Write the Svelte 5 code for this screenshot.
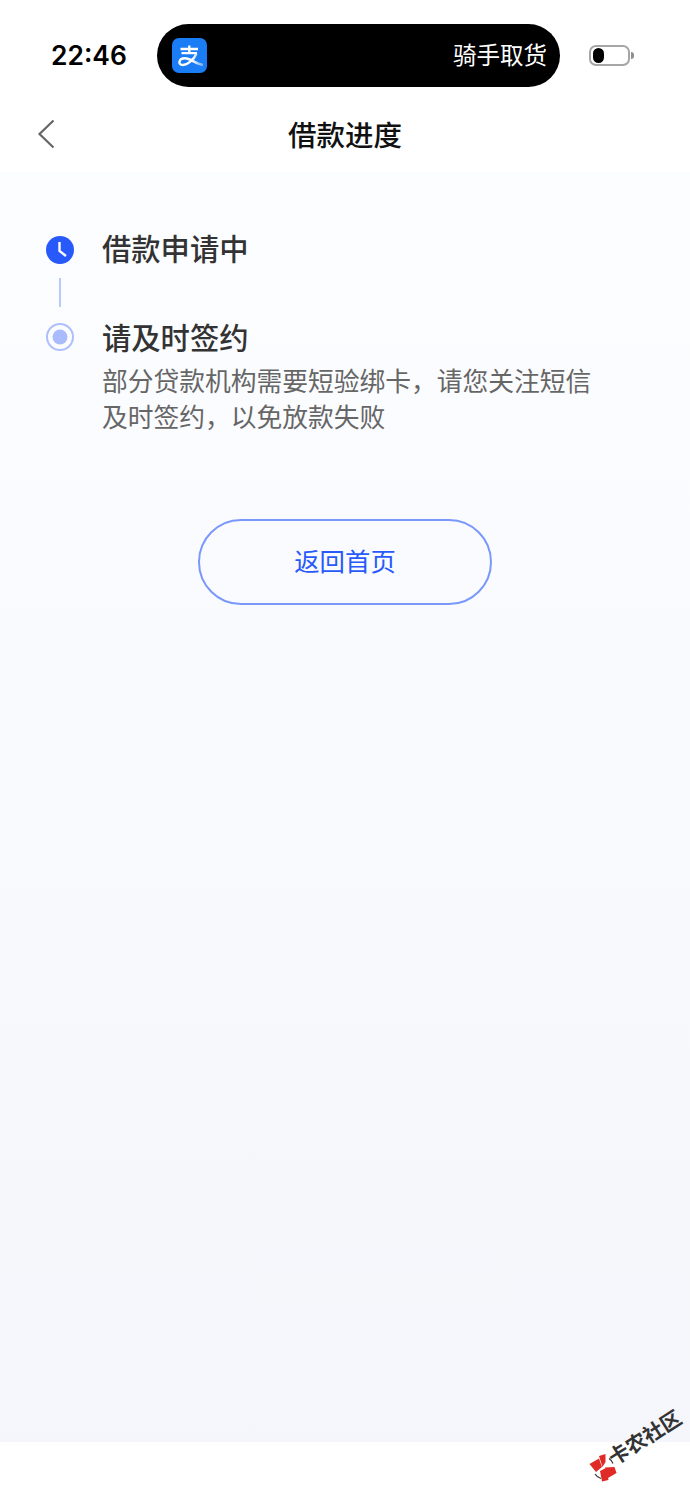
<script>
	const steps = [
		{ title: '借款申请中', kind: 'done' },
		{ title: '请及时签约', kind: 'current', desc: '部分贷款机构需要短验绑卡，请您关注短信及时签约，以免放款失败' }
	];
</script>

<div class="page">
	<header class="top">
		<div class="status">
			<span class="time">22:46</span>
			<div class="island">
				<svg class="app-logo" width="35" height="35" viewBox="0 0 35 35" aria-hidden="true">
					<defs>
						<linearGradient id="swoosh" x1="0" x2="1" y1="0" y2="0">
							<stop offset="0.55" stop-color="#fff" />
							<stop offset="1" stop-color="#fff" stop-opacity="0.35" />
						</linearGradient>
					</defs>
					<rect width="35" height="35" rx="7" fill="#1a7df5" />
					<path d="M8.5 11H26M17.3 7.5V15M9.5 15.2H25" fill="none" stroke="#fff" stroke-width="2.3" />
					<path d="M24.5 15.5C22 22 15 27 11 27C5.5 27 6.5 20.3 13 20.3C18.5 20.3 24 26 31 27" fill="none" stroke="url(#swoosh)" stroke-width="2.4" />
				</svg>
				<span class="island-text">骑手取货</span>
			</div>
			<div class="battery">
				<div class="battery-body"><div class="battery-level"></div></div>
				<div class="battery-cap"></div>
			</div>
		</div>
		<div class="nav">
			<svg class="back" width="20" height="32" viewBox="0 0 20 32" aria-hidden="true">
				<path d="M17.5 2.5 3.5 16l14 13.5" fill="none" stroke="#666" stroke-width="2.2" />
			</svg>
			<h1>借款进度</h1>
		</div>
	</header>

	<main class="content">
		<ul class="steps">
			{#each steps as step, i}
				<li class="step">
					<div class="rail">
						{#if step.kind === 'done'}
							<svg width="28" height="28" viewBox="0 0 28 28" aria-hidden="true">
								<circle cx="14" cy="14" r="14" fill="#2859fb" />
								<path d="M13.5 6v9l6.5 5" fill="none" stroke="#fff" stroke-width="2.4" />
							</svg>
						{:else}
							<svg width="28" height="28" viewBox="0 0 28 28" aria-hidden="true">
								<circle cx="14" cy="14" r="13" fill="none" stroke="#aebffd" stroke-width="2" />
								<circle cx="14" cy="14" r="7.5" fill="#a9bbfd" />
							</svg>
						{/if}
						{#if i < steps.length - 1}
							<div class="line"></div>
						{/if}
					</div>
					<div class="body">
						<div class="title">{step.title}</div>
						{#if step.desc}
							<p class="desc">{step.desc}</p>
						{/if}
					</div>
				</li>
			{/each}
		</ul>
		<button class="home">返回首页</button>
	</main>

	<footer class="bottom"></footer>

	<!-- site watermark stamped over the corner -->
	<div class="mark">
		<svg width="32" height="32" viewBox="0 0 32 32" aria-hidden="true">
			<circle cx="15.5" cy="15" r="10" fill="#fff" />
			<path d="M7 22a10 10 0 0 0 6 4.500M21 6.500a10 10 0 0 1 4 5" fill="none" stroke="#333" stroke-width="1.2" />
			<path d="M1.500 12 11 6.500l3 8.500-6 5z M11 4 17.500 2v8l-3 5z M17 15.500 26.500 15l2 6-8.500 5z M12 19l6-3 2.500 12-6.500 1.500z" fill="#e02a25" />
		</svg>
		<span class="mark-text">卡农社区</span>
	</div>
</div>

<style>
	:global(body) {
		margin: 0;
		background: #fff;
	}

	.page {
		position: relative;
		width: 690px;
		height: 1500px;
		overflow: hidden;
		display: flex;
		flex-direction: column;
		font-family: 'Liberation Sans', 'Noto Sans CJK SC', sans-serif;
		background: #fff;
	}

	.top {
		height: 172px;
		flex: none;
		background: #fff;
	}

	.status {
		height: 87px;
		box-sizing: border-box;
		padding: 24px 56px 0 51px;
		display: flex;
		align-items: flex-start;
	}

	.time {
		width: 106px;
		flex: none;
		margin-top: 14px;
		font-family: Inter, sans-serif;
		font-size: 26.4px;
		line-height: 35px;
		font-weight: 600;
		color: #000;
	}

	.island {
		width: 403px;
		height: 63px;
		flex: none;
		box-sizing: border-box;
		padding: 0 13px 0 15px;
		background: #000;
		border-radius: 32px;
		display: flex;
		align-items: center;
		justify-content: space-between;
	}

	.app-logo {
		display: block;
		flex: none;
	}

	.island-text {
		padding-bottom: 4px;
		font-size: 23.5px;
		color: #fff;
	}

	.battery {
		margin: 21px 0 0 29px;
		display: flex;
		align-items: center;
	}

	.battery-body {
		width: 41px;
		height: 21px;
		box-sizing: border-box;
		padding: 1px 2px;
		border: 2px solid #a6a6a6;
		border-radius: 7px;
	}

	.battery-level {
		width: 11px;
		height: 15px;
		background: #000;
		border-radius: 6px;
	}

	.battery-cap {
		width: 3px;
		height: 7px;
		margin-left: 1px;
		background: #8f8f8f;
		border-radius: 0 3px 3px 0;
	}

	.nav {
		height: 85px;
		position: relative;
		display: flex;
		align-items: center;
		justify-content: center;
	}

	.back {
		position: absolute;
		left: 36px;
		top: 31px;
	}

	h1 {
		margin: 7px 0 0;
		font-size: 28.5px;
		font-weight: 500;
		color: #111;
	}

	.content {
		height: 1270px;
		flex: none;
		box-sizing: border-box;
		padding-top: 62px;
		background: linear-gradient(#fcfdff, #f5f6fb);
		display: flex;
		flex-direction: column;
		align-items: center;
	}

	.steps {
		list-style: none;
		width: 100%;
		margin: 0;
		padding: 0 96px 0 46px;
		box-sizing: border-box;
	}

	.step {
		display: flex;
		gap: 28px;
	}

	.rail {
		width: 28px;
		flex: none;
		padding-top: 2px;
		display: flex;
		flex-direction: column;
		align-items: center;
	}

	.rail svg {
		display: block;
	}

	.line {
		width: 2px;
		height: 29px;
		margin-top: 14px;
		margin-bottom: 14px;
		background: #b9c8fd;
	}

	.body {
		margin-top: -2px;
	}

	.step + .step .body {
		margin-top: 0;
	}

	.title {
		font-size: 29.3px;
		line-height: 36px;
		font-weight: 500;
		color: #333;
	}

	.desc {
		margin: 7px 0 0;
		font-size: 25.75px;
		line-height: 36px;
		color: #666;
	}

	.home {
		width: 294px;
		height: 86px;
		margin-top: 83px;
		padding: 0 0 4px;
		box-sizing: border-box;
		border: 2px solid #7a98fc;
		border-radius: 43px;
		background: transparent;
		color: #2859fb;
		font-family: inherit;
		font-size: 25.4px;
	}

	.bottom {
		flex: 1;
		background: #fff;
	}

	.mark {
		position: absolute;
		left: 588px;
		top: 1452px;
		width: 32px;
		height: 32px;
	}

	.mark svg {
		display: block;
	}

	.mark-text {
		position: absolute;
		left: 16px;
		top: -28px;
		width: 82px;
		font-size: 20.5px;
		line-height: 28px;
		font-weight: 700;
		color: #333;
		white-space: nowrap;
		transform: rotate(-32.4deg);
	}
</style>
